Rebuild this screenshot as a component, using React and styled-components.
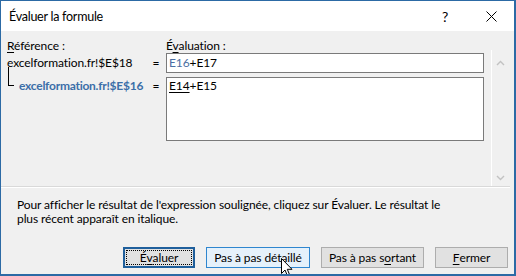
import React from "react";
import styled, { createGlobalStyle } from "styled-components";

const Global = createGlobalStyle`
  html, body { margin: 0; padding: 0; background: #ffffff; }
  body { font-family: Lato, "Noto Sans", sans-serif; }
  * { box-sizing: border-box; }
`;

const FONT = `Lato, "Noto Sans", sans-serif`;

const Window = styled.div`
  position: relative;
  width: 516px;
  height: 276px;
  border-style: solid;
  border-color: #2c6aa5;
  border-width: 1px 2px 2px 1px;
  background: #f0f0f0;
  display: flex;
  flex-direction: column;
  font-family: ${FONT};
  font-size: 12px;
  letter-spacing: -0.1px;
  color: #000;
  overflow: hidden;
`;

const TitleBar = styled.div`
  height: 30px;
  background: #ffffff;
  display: flex;
  align-items: center;
  padding-left: 8px;
  flex-shrink: 0;
`;

const TitleText = styled.div`
  flex: 1;
  font-size: 12.5px;
  letter-spacing: -0.25px;
  color: #000;
`;

const TitleButton = styled.div`
  width: 46px;
  height: 30px;
  display: flex;
  align-items: center;
  justify-content: center;
  font-size: 14px;
  color: #000;
`;

const Main = styled.div`
  display: flex;
  height: 155px;
  flex-shrink: 0;
`;

const Grid = styled.div`
  display: grid;
  grid-template-columns: 139px 20px 318px;
  grid-template-rows: 15px 20px 68px;
  padding: 7px 0 0 6px;
  align-content: start;
`;

const Label = styled.div`
  line-height: 15px;
  white-space: nowrap;
`;

const RefText = styled.div`
  position: relative;
  white-space: nowrap;
  margin-top: ${(p) => (p.$child ? "4px" : "0")};
  padding-left: ${(p) => (p.$child ? "12px" : "0")};
  padding-top: ${(p) => (p.$child ? "1px" : "0")};
  line-height: ${(p) => (p.$child ? "15px" : "20px")};
  color: ${(p) => (p.$child ? "#3b6ea8" : "#000")};
  font-weight: ${(p) => (p.$child ? 700 : 400)};
  letter-spacing: ${(p) => (p.$child ? "-0.25px" : "-0.1px")};
`;

const Connector = styled.span`
  position: absolute;
  left: 1px;
  top: -10px;
  width: 6px;
  height: 19px;
  border-left: 1px solid #000;
  border-bottom: 1px solid #000;
`;

const Equals = styled.div`
  text-align: center;
  margin-top: ${(p) => (p.$child ? "4px" : "0")};
  padding-top: ${(p) => (p.$child ? "1px" : "0")};
  line-height: ${(p) => (p.$child ? "15px" : "20px")};
`;

const Box = styled.div`
  background: #ffffff;
  border: 1px solid #7a7a7a;
  margin-top: ${(p) => (p.$tall ? "4px" : "0")};
  padding: 0 2px;
  line-height: ${(p) => (p.$tall ? "15px" : "18px")};
  white-space: nowrap;
`;

const BlueRef = styled.span`
  color: #4c6fa3;
`;

const Under = styled.span`
  text-decoration: underline;
  text-underline-offset: 2px;
`;

const ScrollBar = styled.div`
  margin-top: 19px;
  margin-left: 7px;
  width: 17px;
  height: 136px;
  border-left: 1px solid #ffffff;
  display: flex;
  flex-direction: column;
  justify-content: space-between;
  align-items: center;
  padding: 10px 0 5px 0;
`;

const Separator = styled.div`
  height: 2px;
  margin-right: 4px;
  border-top: 1px solid #d9d9d9;
  border-bottom: 1px solid #ffffff;
  flex-shrink: 0;
`;

const Description = styled.p`
  margin: 0;
  padding: 10px 0 0 16px;
  line-height: 14px;
  width: 460px;
`;

const Buttons = styled.div`
  display: flex;
  justify-content: flex-end;
  gap: 11px;
  margin-top: 21px;
  padding-right: 6px;
`;

const Button = styled.div`
  position: relative;
  width: ${(p) => p.$w}px;
  height: 21px;
  display: flex;
  align-items: center;
  justify-content: center;
  background: ${(p) => (p.$hover ? "#e5f1fb" : "#e1e1e1")};
  border: ${(p) =>
    p.$default ? "2px solid #1f5f9c" : p.$hover ? "1px solid #2f86cf" : "1px solid #adadad"};
  white-space: nowrap;
`;

const Focus = styled.span`
  position: absolute;
  inset: 1px;
  border: 1px dotted #000;
`;

const Cursor = styled.svg`
  position: absolute;
  left: 280px;
  top: 257px;
`;

const Chevron = ({ up }) => (
  <svg width="9" height="6" viewBox="0 0 9 6">
    <path
      d={up ? "M1 5 L4.5 1.5 L8 5" : "M1 1 L4.5 4.5 L8 1"}
      fill="none"
      stroke="#c2c2c2"
      strokeWidth="1.4"
    />
  </svg>
);

export default function App() {
  return (
    <>
      <Global />
      <Window>
        <TitleBar>
          <TitleText>Évaluer la formule</TitleText>
          <TitleButton>?</TitleButton>
          <TitleButton>
            <svg width="11" height="11" viewBox="0 0 11 11">
              <path d="M0.5 0.5 L10.5 10.5 M10.5 0.5 L0.5 10.5" stroke="#000" strokeWidth="1" />
            </svg>
          </TitleButton>
        </TitleBar>
        <Main>
          <Grid>
            <Label>
              <Under>R</Under>éférence :
            </Label>
            <div />
            <Label>
              É<Under>v</Under>aluation :
            </Label>

            <RefText>excelformation.fr!$E$18</RefText>
            <Equals>=</Equals>
            <Box>
              <BlueRef>E16</BlueRef>+E17
            </Box>

            <RefText $child>
              <Connector />
              excelformation.fr!$E$16
            </RefText>
            <Equals $child>=</Equals>
            <Box $tall>
              <Under>E14</Under>+E15
            </Box>
          </Grid>
          <ScrollBar>
            <Chevron up />
            <Chevron />
          </ScrollBar>
        </Main>
        <Separator />
        <Description>
          Pour afficher le résultat de l'expression soulignée, cliquez sur Évaluer. Le résultat le
          plus récent apparaît en italique.
        </Description>
        <Buttons>
          <Button $w={72} $default>
            <Focus />
            É<Under>v</Under>aluer
          </Button>
          <Button $w={104} $hover>
            Pas à pas dét<Under>a</Under>illé
          </Button>
          <Button $w={103}>
            Pas à pas s<Under>o</Under>rtant
          </Button>
          <Button $w={73}>
            <Under>F</Under>ermer
          </Button>
        </Buttons>
        <Cursor width="13" height="20" viewBox="0 0 13 20">
          <path
            d="M0.5 0.5 L0.5 15.5 L4 12 L6.5 18 L8.7 17 L6.3 11.3 L11 11.3 Z"
            fill="#fff"
            stroke="#000"
            strokeWidth="1"
            strokeLinejoin="miter"
          />
        </Cursor>
      </Window>
    </>
  );
}
